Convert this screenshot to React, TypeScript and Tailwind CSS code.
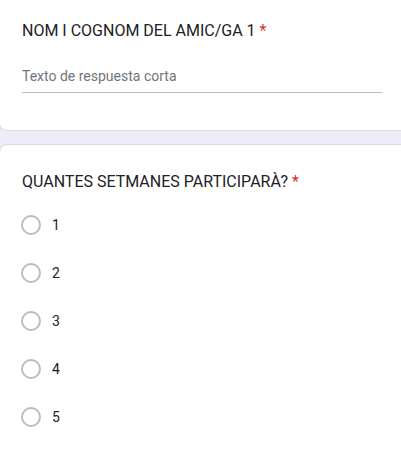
import React from "react";

const options = ["1", "2", "3", "4", "5"];

const Radio = ({ label }: { label: string }) => {
  return (
    <div className="flex items-center h-[48px]">
      <span className="w-[20px] h-[20px] rounded-full border-2 border-[#bdbdbd] -ml-px" />
      <span className="ml-[11px] text-[14px] text-[#202124]">{label}</span>
    </div>
  );
};

const App: React.FC = () => {
  return (
    <div className="w-[401px] h-[452px] overflow-hidden bg-[#f0ebf8] font-['Roboto',sans-serif]">
      <div className="-ml-px w-[420px] bg-white border-l border-b border-[#dadce0] rounded-bl-lg pt-[21px] pl-[22px] h-[131px]">
        <h2 className="text-[16px] leading-[20px] text-[#202124]">
          NOM I COGNOM DEL AMIC/GA 1 <span className="text-[#d93025]">*</span>
        </h2>
        <div className="mt-[25px] w-[360px] border-b border-[#bdbdbd] pb-[6px]">
          <p className="text-[14px] leading-[20px] text-[#70757a]">Texto de respuesta corta</p>
        </div>
      </div>
      <div className="mt-[13px] -ml-px w-[420px] bg-white border-l border-t border-[#dadce0] rounded-tl-lg pt-[27px] pl-[22px] h-[320px]">
        <h2 className="text-[16px] leading-[20px] text-[#202124]">
          QUANTES SETMANES PARTICIPARÀ? <span className="text-[#d93025]">*</span>
        </h2>
        <div className="mt-[9px] flex flex-col">
          {options.map((o) => (
            <Radio key={o} label={o} />
          ))}
        </div>
      </div>
    </div>
  );
};

export default App;
